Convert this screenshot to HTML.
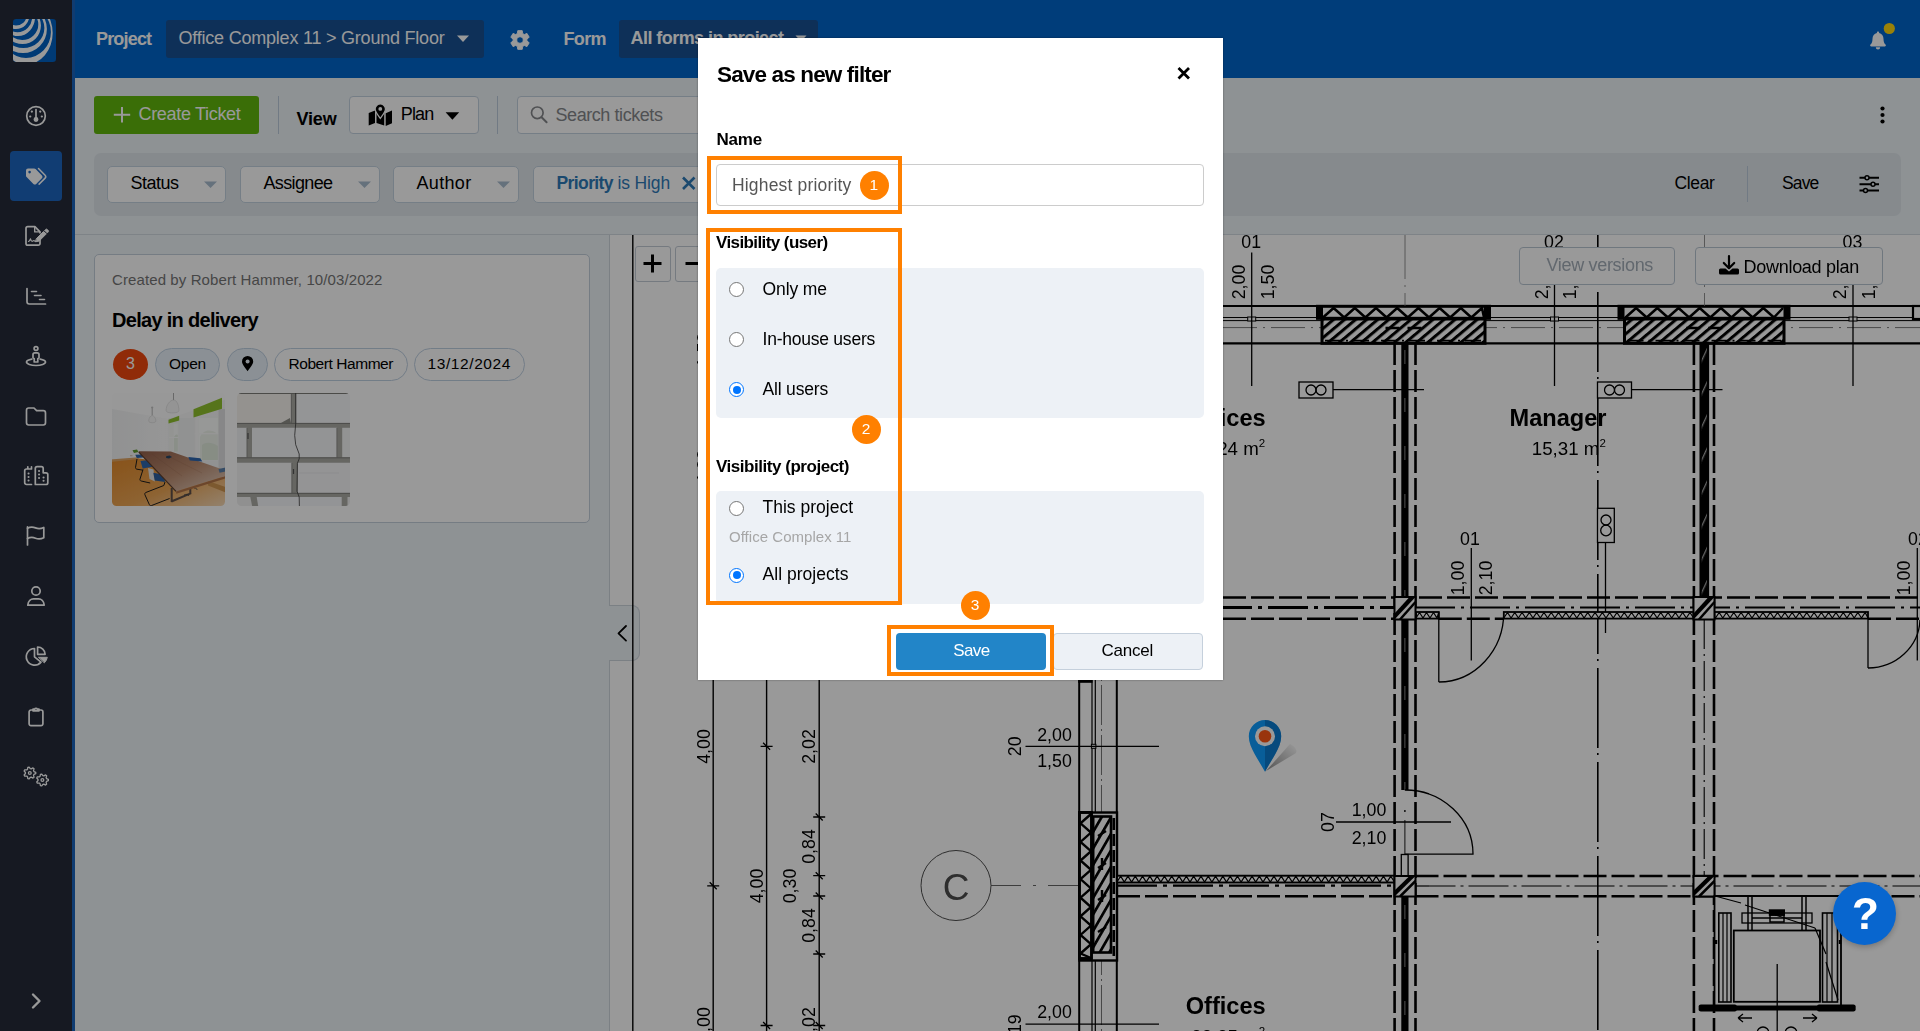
<!DOCTYPE html>
<html lang="en"><head><meta charset="utf-8"><title>Tickets - Save as new filter</title>
<style>
*{box-sizing:border-box;margin:0;padding:0}
html,body{width:1920px;height:1031px;overflow:hidden;background:#edf3f7;font-family:"Liberation Sans",sans-serif;color:#000}
.a{position:absolute}
.t{position:absolute;white-space:pre;line-height:24px;height:24px}
#page{position:absolute;left:0;top:0;width:1920px;height:1031px;overflow:hidden}
#dim{position:absolute;left:0;top:0;width:1920px;height:1031px;background:rgba(0,0,0,.4)}
svg{position:absolute;left:0;top:0;overflow:visible}
  .btn{position:absolute;border:1px solid #c4d2e0;border-radius:4px;background:#fff}
.pill{position:absolute;border:1px solid #bfd0e2;border-radius:17px}
</style></head><body>
<div id="page">
<div class="a" style="left:0;top:0;width:72px;height:1031px;background:#252b3a"></div>
<div class="a" style="left:72px;top:0;width:3px;height:1031px;background:#1b64bd"></div>
<div class="a" style="left:10px;top:151px;width:52px;height:50px;border-radius:4px;background:#1d66c0"></div>
<div class="a" style="left:75px;top:0;width:1845px;height:78px;background:#0066cc"></div>
<div class="a" style="left:166px;top:20px;width:318px;height:38px;border-radius:3px;background:#185093"></div>
<div class="a" style="left:619px;top:20px;width:199px;height:38px;border-radius:3px;background:#185093"></div>
<span class="t" style="left:96.00px;top:26.50px;font-size:18px;font-weight:700;color:#ffffff;letter-spacing:-0.819px;">Project</span>
<span class="t" style="left:178.50px;top:26.00px;font-size:18px;font-weight:400;color:#ffffff;letter-spacing:-0.218px;">Office Complex 11 &gt; Ground Floor</span>
<span class="t" style="left:563.50px;top:26.50px;font-size:18px;font-weight:700;color:#ffffff;letter-spacing:-0.625px;">Form</span>
<span class="t" style="left:630.50px;top:25.50px;font-size:18px;font-weight:700;color:#ffffff;letter-spacing:-0.552px;">All forms in project</span>
<div class="a" style="left:94px;top:96px;width:165px;height:38px;border-radius:3px;background:#61b70d"></div>
<span class="t" style="left:138.50px;top:102.00px;font-size:18px;font-weight:400;color:#ffffff;letter-spacing:-0.311px;">Create Ticket</span>
<div class="a" style="left:278px;top:96px;width:1px;height:38px;background:#bccbdc"></div>
<span class="t" style="left:296.50px;top:106.50px;font-size:18px;font-weight:700;color:#000;letter-spacing:-0.176px;">View</span>
<div class="btn" style="left:349px;top:96px;width:130px;height:38px"></div>
<span class="t" style="left:400.70px;top:102.00px;font-size:18px;font-weight:400;color:#000;letter-spacing:-0.808px;">Plan</span>
<div class="a" style="left:497px;top:96px;width:1px;height:38px;background:#bccbdc"></div>
<div class="btn" style="left:517px;top:96px;width:420px;height:38px"></div>
<span class="t" style="left:555.50px;top:103.00px;font-size:18px;font-weight:400;color:#85878b;letter-spacing:-0.432px;">Search tickets</span>
<div class="a" style="left:94px;top:153px;width:1807px;height:63px;border-radius:7px;background:#dfe7ec"></div>
<div class="btn" style="left:107px;top:166px;width:119px;height:36.5px;border-radius:5px"></div>
<span class="t" style="left:130.50px;top:171.00px;font-size:18px;font-weight:400;color:#000;letter-spacing:-0.505px;">Status</span>
<div class="btn" style="left:240px;top:166px;width:140px;height:36.5px;border-radius:5px"></div>
<span class="t" style="left:263.50px;top:171.00px;font-size:18px;font-weight:400;color:#000;letter-spacing:-0.633px;">Assignee</span>
<div class="btn" style="left:393px;top:166px;width:126px;height:36.5px;border-radius:5px"></div>
<span class="t" style="left:416.50px;top:171.00px;font-size:18px;font-weight:400;color:#000;letter-spacing:0.326px;">Author</span>
<div class="btn" style="left:533px;top:166px;width:200px;height:36.5px;border-radius:5px"></div>
<span class="t" style="left:556.50px;top:171.00px;font-size:17.5px;font-weight:700;color:#2e7ab8;letter-spacing:-0.598px;">Priority</span>
<span class="t" style="left:617.50px;top:171.00px;font-size:17.5px;font-weight:400;color:#2e7ab8;letter-spacing:-0.143px;">is High</span>
<span class="t" style="left:1674.50px;top:171.00px;font-size:17.5px;font-weight:400;color:#000;letter-spacing:-0.366px;">Clear</span>
<div class="a" style="left:1747px;top:166px;width:1px;height:36px;background:#bccbdc"></div>
<span class="t" style="left:1782.00px;top:171.00px;font-size:17.5px;font-weight:400;color:#000;letter-spacing:-0.848px;">Save</span>
<div class="a" style="left:75px;top:234px;width:1845px;height:1px;background:#d3dae1"></div>
<div class="a" style="left:609px;top:235px;width:1px;height:796px;background:#cdd5dd"></div>
<div class="a" style="left:610px;top:235px;width:1310px;height:796px;background:#fff"></div>
<div class="a" style="left:94px;top:254px;width:496px;height:269px;background:#fff;border:1px solid #c3cfdb;border-radius:5px"></div>
<span class="t" style="left:112.00px;top:268.00px;font-size:15px;font-weight:400;color:#757575;letter-spacing:0.102px;">Created by Robert Hammer, 10/03/2022</span>
<span class="t" style="left:112.00px;top:308.00px;font-size:20px;font-weight:700;color:#000;letter-spacing:-0.699px;">Delay in delivery</span>
<div class="a" style="left:113px;top:349px;width:35px;height:31px;border-radius:50%;background:#f0480e"></div>
<span class="t" style="left:126.00px;top:352.00px;font-size:16px;font-weight:400;color:#ffffff;letter-spacing:0.094px;">3</span>
<div class="pill" style="left:155px;top:348px;width:65px;height:33px;background:#e8f1f8"></div>
<span class="t" style="left:169.00px;top:352.00px;font-size:15.5px;font-weight:400;color:#000;letter-spacing:-0.230px;">Open</span>
<div class="pill" style="left:227px;top:348px;width:41px;height:33px;background:#e8f1f8"></div>
<div class="pill" style="left:274px;top:348px;width:134px;height:33px"></div>
<span class="t" style="left:288.50px;top:352.00px;font-size:15.5px;font-weight:400;color:#000;letter-spacing:-0.442px;">Robert Hammer</span>
<div class="pill" style="left:414px;top:348px;width:111px;height:33px"></div>
<span class="t" style="left:427.50px;top:352.00px;font-size:15.5px;font-weight:400;color:#000;letter-spacing:0.592px;">13/12/2024</span>
<svg width="1920" height="1031" viewBox="0 0 1920 1031">
<defs><clipPath id="ph"><rect x="0" y="0" width="113" height="113" rx="4.5"/></clipPath>
<linearGradient id="wall" x1="0" y1="0" x2="1" y2="0"><stop offset="0" stop-color="#f1f2f3"/><stop offset=".45" stop-color="#fafafa"/><stop offset="1" stop-color="#f6f6f7"/></linearGradient>
<linearGradient id="flr" x1="0" y1="0" x2="1" y2="1"><stop offset="0" stop-color="#e2892a"/><stop offset=".55" stop-color="#eca554"/><stop offset="1" stop-color="#f6dcbc"/></linearGradient>
<linearGradient id="tbl" x1="0" y1="0" x2="1" y2="1"><stop offset="0" stop-color="#94604a"/><stop offset=".5" stop-color="#bd8e72"/><stop offset="1" stop-color="#e8d6c8"/></linearGradient>
<filter id="b1"><feGaussianBlur stdDeviation=".45"/></filter>
</defs>
<g transform="translate(112 393)" clip-path="url(#ph)"><g filter="url(#b1)">
<rect x="-2" y="-2" width="117" height="117" fill="url(#wall)"/>
<path d="M-2 -2H115V6L68 22 56 26 0 16Z" fill="#fdfdfd"/>
<path d="M56.500 25H115V80H56.500Z" fill="#f2f3f4"/>
<rect x="82.700" y="23.900" width="24" height="43.600" fill="#f6f8f5"/>
<path d="M86.700 25h19.200v41.900h-19.200z" fill="#fcfdfc"/><path d="M88 44c3-7 10-9 17.900-3v25.900h-17.900z" fill="#eef3ec"/><path d="M90 52c4-3 9-3 15.900 1v13.900h-15.900z" fill="#dde8da" opacity=".8"/>
<path d="M82.700 40.700h24" stroke="#fafafa" stroke-width="1.300"/><path d="M85 23.900v43.600" stroke="#fbfbfb" stroke-width="3"/>
<rect x="57" y="29.700" width="9.400" height="30.300" fill="#f5f7f4"/><path d="M61.700 30.800h4.100v28h-4.100z" fill="#fafcfa"/><path d="M62 44c1.500-3 3-3 3.800-2v16.800h-3.800z" fill="#e6eee3"/><path d="M57 44.500h9.400" stroke="#fafafa" stroke-width="1"/>
<path d="M106.500 16H115V82H106.500Z" fill="#e2e2e3"/>
<path d="M81.500 16.300L110 4.700V15.700L81.500 24.400Z" fill="#8fc22f"/>
<path d="M56.500 26.800L67.200 22.700V27.400L56.500 30.600Z" fill="#8fc22f"/>
<path d="M61.500 -1v8.500" stroke="#777" stroke-width=".6"/><path d="M54.100 17.500c0-5.500 4-10.500 7.400-10.500s5.400 5 5.400 10.500c0 1.600-2.800 2.400-6.400 2.400s-6.400-.8-6.400-2.400z" fill="#f7f7f7" stroke="#cfcfcf" stroke-width=".5"/>
<path d="M40.200 14v8.500" stroke="#888" stroke-width=".6"/><circle cx="40.200" cy="14.500" r="1.100" fill="#c4c4c4"/><path d="M36.700 28c0-3 2-5.500 3.500-5.500s3.700 2.500 3.700 5.500c0 1.100-1.600 1.700-3.600 1.700s-3.600-.6-3.600-1.700z" fill="#f5f5f5" stroke="#cfcfcf" stroke-width=".5"/>
<path d="M-2 67.700L27 65.500 60 70 115 86V115H-2Z" fill="url(#flr)"/>
<path d="M-2 66.400L26.800 64.300V66L-2 68.900Z" fill="#e0a565"/>
<path d="M96 88l19 6.500v5.500l-19-7.500z" fill="#cf9450"/>
<rect x="18" y="62" width="2.500" height="1.300" fill="#d8c8b8"/>
<path d="M59.700 95v14M59.400 108.500l19.800-8.400M78.300 95v6" stroke="#5e5048" stroke-width="2" fill="none"/>
<path d="M72 102c2-1 4-1 5 1M82 95c2 0 3 .5 3 2" stroke="#444" stroke-width=".8" fill="none"/>
<path d="M23.300 61.700l6.500-.3 1.500 3.200-6.500.4zM28.500 68.100l10-1.300 2.200 7-10 1.600z" fill="#2f66ac"/>
<path d="M20.500 57.300l4.500-.8 1.500 2.600-4.500.9z" fill="#5f9a2c"/>
<path d="M36 75l5.500 1.500 1.500 12-5.500-2.500z" fill="#e6e6e6"/><path d="M41.300 79.700l10.500 2 1.200 7.300-10.300-1.500z" fill="#2d5f9f"/>
<path d="M25 66l-1.500 8.500c0 1 .5 1.500 1.500 1.700l6 1M31 76.500l-3 9.500c-.3 1 .2 1.800 1.200 2l9 2M53 89l-1.200 3.500-18 7c-1 .5-1.200 1.200-.9 2.200l4.500 10c.4 1 1.200 1.200 2.200.8l18-7" fill="none" stroke="#1d1d1d" stroke-width="1"/>
<path d="M26.800 58.200L58.800 58.500 115 78V82.500L64 98.400 26.800 59.200Z" fill="url(#tbl)"/>
<path d="M26.800 59.200L64 98.400" fill="none" stroke="#5a3e2e" stroke-width="1.200"/>
<path d="M64 98.400L115 82.500V85L64.300 100.800Z" fill="#b5754a"/>
<path d="M40 61l30 22M50 60l40 20" stroke="#8a5a40" stroke-width=".4" opacity=".5" fill="none"/>
<path d="M54.100 63.200l3.500-.8 2.400 1.600-3 1.500-2.900-.6z" fill="#2b4664"/><path d="M76.300 64l12 1.300 2 3.200-12.500-1z" fill="#2d66b0"/><path d="M106.500 76l7-1.500v4l-6 1.200z" fill="#5a7fa8"/>
</g></g>
<g transform="translate(237 393)" clip-path="url(#ph)"><g filter="url(#b1)">
<rect x="-2" y="-2" width="117" height="117" fill="#aaaaa4"/>
<path d="M-2 .8H54V30.200H-2Z" fill="#f7f4ef"/><path d="M59.300 .8H115V30.200H59.300Z" fill="#f7f8fa"/>
<path d="M-2 34.800H9.800V64.500H-2Z" fill="#f4f5f7"/><path d="M15 34.800H99.800V64.500H15Z" fill="#f6f7f9"/><path d="M105.200 34.800H115V64.500H105.200Z" fill="#f4f5f6"/>
<path d="M-2 69.700H54.600V100H-2Z" fill="#f5f5f6"/><path d="M60.800 69.700H115V100H60.800Z" fill="#f7f7f9"/>
<path d="M-2 104H13.300L15.500 115H-2Z" fill="#f0f0f0"/><path d="M19.700 104H104.700V115H21.500Z" fill="#f6f7fa"/><path d="M110.500 104H115V115H110.500Z" fill="#f0f0f0"/>
<path d="M-2 30.400H115M-2 64.800H115M-2 100.300H115M-2 .5H115" stroke="#7d7d78" stroke-width="1"/>
<path d="M54.300 1V30M99.900 35V64.500M54.900 70V100M10 35V64.500" stroke="#7d7d78" stroke-width=".7"/>
<path d="M43.500 30.200L52.900 24.900 54 30.200Z" fill="#8e8e88"/>
<path d="M11 40v6M56.500 76v5" stroke="#555" stroke-width="1.200"/>
<path d="M58.700 -1L58.700 30.700 57.700 42.400 58.700 51.700 62.200 61 62.200 65.700 60.400 70.300 60 98.300 62.200 104 62.400 114" fill="none" stroke="#3a3a3a" stroke-width=".8"/>
<path d="M62 80h40" stroke="#e2e2e2" stroke-width=".6"/>
</g></g>
</svg>
<div class="a" style="left:609px;top:605px;width:31px;height:56px;background:#edf3f7;border:1px solid #cdd5dd;border-left:none;border-radius:0 8px 8px 0"></div>
<svg width="1920" height="1031" viewBox="0 0 1920 1031" style="font-family:'Liberation Sans',sans-serif">
<defs><clipPath id="pc"><rect x="610" y="235" width="1310" height="796"/></clipPath>
<pattern id="hd" width="7.1" height="7.1" patternUnits="userSpaceOnUse" patternTransform="rotate(50)"><rect width="7.1" height="7.1" fill="#fff"/><rect x="0" y="0" width="3" height="7.1" fill="#000"/></pattern>
<pattern id="hdB" width="8.25" height="8.25" patternUnits="userSpaceOnUse" patternTransform="rotate(30)"><rect width="8.25" height="8.25" fill="#fff"/><rect x="0" y="0" width="2.7" height="8.25" fill="#000"/></pattern>
<pattern id="hd2" width="14" height="14" patternUnits="userSpaceOnUse" patternTransform="rotate(25)"><rect width="14" height="14" fill="#000"/><rect x="0" y="0" width="1.3" height="14" fill="#aaa"/></pattern>
<filter id="pb" x="-5%" y="-5%" width="110%" height="110%"><feGaussianBlur stdDeviation="0.4"/></filter>
</defs>
<g clip-path="url(#pc)"><g filter="url(#pb)" fill="none" stroke="#000" stroke-width="1.3">
<path d="M632.8 235 L632.8 1031" stroke-width="1.4" />
<path d="M713.2 235 L713.2 1031" stroke-width="1.4" />
<path d="M766.6 235 L766.6 1031" stroke-width="1.4" />
<path d="M819.2 235 L819.2 1031" stroke-width="1.4" />
<path d="M760.6 746.3 L772.6 746.3 M763.1 742.8 L770.1 749.8" stroke-width="1.3"/>
<path d="M813.2 817 L825.2 817 M815.7 813.5 L822.7 820.5" stroke-width="1.3"/>
<path d="M813.2 875.7 L825.2 875.7 M815.7 872.2 L822.7 879.2" stroke-width="1.3"/>
<path d="M813.2 896 L825.2 896 M815.7 892.5 L822.7 899.5" stroke-width="1.3"/>
<path d="M813.2 954 L825.2 954 M815.7 950.5 L822.7 957.5" stroke-width="1.3"/>
<path d="M707.2 885.8 L719.2 885.8 M709.7 882.3 L716.7 889.3" stroke-width="1.3"/>
<path d="M760.6 1025.5 L772.6 1025.5 M763.1 1022 L770.1 1029" stroke-width="1.3"/>
<path d="M813.2 1025.5 L825.2 1025.5 M815.7 1022 L822.7 1029" stroke-width="1.3"/>
<path d="M707.2 606 L719.2 606 M709.7 602.5 L716.7 609.5" stroke-width="1.3"/>
<path d="M760.6 467 L772.6 467 M763.1 463.5 L770.1 470.5" stroke-width="1.3"/>
<path d="M813.2 537 L825.2 537 M815.7 533.5 L822.7 540.5" stroke-width="1.3"/>
<path d="M813.2 676 L825.2 676 M815.7 672.5 L822.7 679.5" stroke-width="1.3"/>
<text x="703.8" y="746.5" font-size="17.8" font-weight="400" fill="#000" stroke="none" text-anchor="middle" dominant-baseline="central" transform="rotate(-90 703.8 746.5)">4,00</text>
<text x="809.3" y="746.5" font-size="17.8" font-weight="400" fill="#000" stroke="none" text-anchor="middle" dominant-baseline="central" transform="rotate(-90 809.3 746.5)">2,02</text>
<text x="809.3" y="846.5" font-size="17.8" font-weight="400" fill="#000" stroke="none" text-anchor="middle" dominant-baseline="central" transform="rotate(-90 809.3 846.5)">0,84</text>
<text x="757.2" y="886" font-size="17.8" font-weight="400" fill="#000" stroke="none" text-anchor="middle" dominant-baseline="central" transform="rotate(-90 757.2 886)">4,00</text>
<text x="790.3" y="886" font-size="17.8" font-weight="400" fill="#000" stroke="none" text-anchor="middle" dominant-baseline="central" transform="rotate(-90 790.3 886)">0,30</text>
<text x="809.3" y="925.5" font-size="17.8" font-weight="400" fill="#000" stroke="none" text-anchor="middle" dominant-baseline="central" transform="rotate(-90 809.3 925.5)">0,84</text>
<text x="703.8" y="1024.5" font-size="17.8" font-weight="400" fill="#000" stroke="none" text-anchor="middle" dominant-baseline="central" transform="rotate(-90 703.8 1024.5)">4,00</text>
<text x="809.3" y="1024.5" font-size="17.8" font-weight="400" fill="#000" stroke="none" text-anchor="middle" dominant-baseline="central" transform="rotate(-90 809.3 1024.5)">2,02</text>
<text x="703.8" y="467" font-size="17.8" font-weight="400" fill="#000" stroke="none" text-anchor="middle" dominant-baseline="central" transform="rotate(-90 703.8 467)">4,00</text>
<text x="809.3" y="467" font-size="17.8" font-weight="400" fill="#000" stroke="none" text-anchor="middle" dominant-baseline="central" transform="rotate(-90 809.3 467)">2,02</text>
<text x="757.2" y="606" font-size="17.8" font-weight="400" fill="#000" stroke="none" text-anchor="middle" dominant-baseline="central" transform="rotate(-90 757.2 606)">4,00</text>
<text x="703.8" y="350" font-size="17.8" font-weight="400" fill="#000" stroke="none" text-anchor="middle" dominant-baseline="central" transform="rotate(-90 703.8 350)">1,50</text>
<path d="M1079.2 235 L1079.2 1031" stroke-width="2" />
<path d="M1092 235 L1092 1031" stroke-width="1.2" />
<path d="M1095.3 235 L1095.3 1031" stroke-width="1.2" />
<path d="M1101.5 235 L1101.5 1031" stroke-width="0.8" stroke="#555" stroke-dasharray="40 4 2 4"/>
<path d="M1116.8 235 L1116.8 1031" stroke-width="2" />
<path d="M1078.2 681.3 L1092.6 681.3" stroke-width="3" />
<rect x="1091.4" y="744.3" width="4.5" height="4" fill="#fff" stroke-width="1"/>
<rect x="1079.5" y="812.5" width="37.5" height="148" fill="#fff" stroke-width="2.4"/>
<rect x="1079.5" y="812.5" width="12" height="146" fill="#fff" stroke-width="2.9"/>
<path d="M1091 814 L1080.5 823.3 L1091 832.6 L1080.5 841.9 L1091 851.2 L1080.5 860.5 L1091 869.8 L1080.5 879.1 L1091 888.4 L1080.5 897.7 L1091 907 L1080.5 916.3 L1091 925.6 L1080.5 934.9 L1091 944.2 L1080.5 953.5 L1091 958" stroke-width="2.4"/>
<rect x="1093.2" y="816.5" width="17.8" height="136" fill="url(#hdB)" stroke-width="2.6"/>
<path d="M1098 836l8-5M1098 868l8-5M1098 900l8-5M1098 932l8-5M1102 858v12M1102 890v12" stroke-width="2.4"/>
<path d="M1113.8 818 L1113.8 956" stroke-width="2.6" stroke-dasharray="12 4"/>
<path d="M1025.5 746.3 L1159 746.3" stroke-width="1.3" />
<text x="1015.5" y="746.3" font-size="17.8" font-weight="400" fill="#000" stroke="none" text-anchor="middle" dominant-baseline="central" transform="rotate(-90 1015.5 746.3)">20</text>
<text x="1054.5" y="734.5" font-size="17.8" font-weight="400" fill="#000" stroke="none" text-anchor="middle" dominant-baseline="central">2,00</text>
<text x="1054.5" y="761.1" font-size="17.8" font-weight="400" fill="#000" stroke="none" text-anchor="middle" dominant-baseline="central">1,50</text>
<path d="M1025.5 1024.2 L1159 1024.2" stroke-width="1.3" />
<text x="1015.5" y="1024.2" font-size="17.8" font-weight="400" fill="#000" stroke="none" text-anchor="middle" dominant-baseline="central" transform="rotate(-90 1015.5 1024.2)">19</text>
<text x="1054.5" y="1012.4" font-size="17.8" font-weight="400" fill="#000" stroke="none" text-anchor="middle" dominant-baseline="central">2,00</text>
<text x="1054.5" y="1039" font-size="17.8" font-weight="400" fill="#000" stroke="none" text-anchor="middle" dominant-baseline="central">1,50</text>
<path d="M1025.5 468 L1159 468" stroke-width="1.3" />
<text x="1015.5" y="468" font-size="17.8" font-weight="400" fill="#000" stroke="none" text-anchor="middle" dominant-baseline="central" transform="rotate(-90 1015.5 468)">21</text>
<text x="1054.5" y="456.2" font-size="17.8" font-weight="400" fill="#000" stroke="none" text-anchor="middle" dominant-baseline="central">2,00</text>
<text x="1054.5" y="482.8" font-size="17.8" font-weight="400" fill="#000" stroke="none" text-anchor="middle" dominant-baseline="central">1,50</text>
<circle cx="956" cy="885.5" r="35" stroke="#4d4d4d" stroke-width="1"/>
<text x="956" y="887" font-size="37" font-weight="400" fill="#4d4d4d" stroke="none" text-anchor="middle" dominant-baseline="central">C</text>
<path d="M991 885.5 L1079 885.5" stroke-width="0.9" stroke="#555" stroke-dasharray="30 12 3 12"/>
<path d="M1079 306 L1920 306" stroke-width="2.2" />
<path d="M1079 343.3 L1920 343.3" stroke-width="2.2" />
<path d="M1079 317.5 L1920 317.5" stroke-width="1" />
<path d="M1079 320.6 L1920 320.6" stroke-width="1" />
<path d="M1079 327.6 L1920 327.6" stroke-width="0.8" stroke="#555" stroke-dasharray="34 6 2 6"/>
<rect x="1317.5" y="306.3" width="172" height="12" fill="#fff" stroke-width="3"/>
<path d="M1323 317.5 L1333.6 308 L1344.2 317.5 L1354.8 308 L1365.4 317.5 L1376 308 L1386.6 317.5 L1397.2 308 L1407.8 317.5 L1418.4 308 L1429 317.5 L1439.6 308 L1450.2 317.5 L1460.8 308 L1471.4 317.5 L1482 308 L1484 317.5" stroke-width="2.5"/>
<rect x="1317.5" y="306.3" width="4.5" height="12" fill="#000" stroke-width="2"/>
<rect x="1485" y="306.3" width="4.5" height="12" fill="#000" stroke-width="2"/>
<rect x="1322" y="319" width="163" height="24.3" fill="url(#hd)" stroke-width="3"/>
<path d="M1325 340.6 L1482 340.6" stroke-width="1.6" stroke-dasharray="16 5 2 5"/>
<path d="M1385.5 328 h14 m8 0 h14" stroke-width="2.6"/>
<rect x="1619" y="306.3" width="170" height="12" fill="#fff" stroke-width="3"/>
<path d="M1625.5 317.5 L1636.1 308 L1646.7 317.5 L1657.3 308 L1667.9 317.5 L1678.5 308 L1689.1 317.5 L1699.7 308 L1710.3 317.5 L1720.9 308 L1731.5 317.5 L1742.1 308 L1752.7 317.5 L1763.3 308 L1773.9 317.5 L1783 308" stroke-width="2.5"/>
<rect x="1619" y="306.3" width="4.5" height="12" fill="#000" stroke-width="2"/>
<rect x="1784.5" y="306.3" width="4.5" height="12" fill="#000" stroke-width="2"/>
<rect x="1624.5" y="319" width="159.5" height="24.3" fill="url(#hd)" stroke-width="3"/>
<path d="M1627.5 340.6 L1781 340.6" stroke-width="1.6" stroke-dasharray="16 5 2 5"/>
<path d="M1686.25 328 h14 m8 0 h14" stroke-width="2.6"/>
<rect x="1913" y="306" width="9" height="13" fill="#fff" stroke-width="2.2"/>
<rect x="1247.7" y="317" width="8" height="4" fill="#fff" stroke-width="1"/>
<rect x="1550.5" y="317" width="8" height="4" fill="#fff" stroke-width="1"/>
<rect x="1849" y="317" width="8" height="4" fill="#fff" stroke-width="1"/>
<text x="1251.2" y="242" font-size="17.8" font-weight="400" fill="#000" stroke="none" text-anchor="middle" dominant-baseline="central">01</text>
<path d="M1251.7 252.5 L1251.7 386" stroke-width="1.3" />
<text x="1239" y="282" font-size="17.8" font-weight="400" fill="#000" stroke="none" text-anchor="middle" dominant-baseline="central" transform="rotate(-90 1239 282)">2,00</text>
<text x="1267.5" y="282" font-size="17.8" font-weight="400" fill="#000" stroke="none" text-anchor="middle" dominant-baseline="central" transform="rotate(-90 1267.5 282)">1,50</text>
<text x="1554" y="242" font-size="17.8" font-weight="400" fill="#000" stroke="none" text-anchor="middle" dominant-baseline="central">02</text>
<path d="M1554.5 252.5 L1554.5 386" stroke-width="1.3" />
<text x="1541.8" y="282" font-size="17.8" font-weight="400" fill="#000" stroke="none" text-anchor="middle" dominant-baseline="central" transform="rotate(-90 1541.8 282)">2,00</text>
<text x="1570.3" y="282" font-size="17.8" font-weight="400" fill="#000" stroke="none" text-anchor="middle" dominant-baseline="central" transform="rotate(-90 1570.3 282)">1,50</text>
<text x="1852.5" y="242" font-size="17.8" font-weight="400" fill="#000" stroke="none" text-anchor="middle" dominant-baseline="central">03</text>
<path d="M1853 252.5 L1853 386" stroke-width="1.3" />
<text x="1840.3" y="282" font-size="17.8" font-weight="400" fill="#000" stroke="none" text-anchor="middle" dominant-baseline="central" transform="rotate(-90 1840.3 282)">2,00</text>
<text x="1868.8" y="282" font-size="17.8" font-weight="400" fill="#000" stroke="none" text-anchor="middle" dominant-baseline="central" transform="rotate(-90 1868.8 282)">1,50</text>
<path d="M1405 235 L1405 306" stroke-width="0.8" stroke="#777" stroke-dasharray="44 6 2 6"/>
<path d="M1704.5 235 L1704.5 306" stroke-width="0.8" stroke="#777" stroke-dasharray="44 6 2 6"/>
<path d="M1597.8 198 L1597.8 1031" stroke-width="1.6" stroke-dasharray="80 5 2 7"/>
<rect x="1299" y="382" width="34" height="16" fill="#fff" stroke-width="1.3"/>
<circle cx="1311" cy="390" r="5" stroke-width="1.3"/><circle cx="1321" cy="390" r="5" stroke-width="1.3"/>
<path d="M1333 389.6 L1424 389.6" stroke-width="1.3" />
<rect x="1597.5" y="382" width="34" height="16" fill="#fff" stroke-width="1.3"/>
<circle cx="1609.5" cy="390" r="5" stroke-width="1.3"/><circle cx="1619.5" cy="390" r="5" stroke-width="1.3"/>
<path d="M1631.5 389.6 L1722.5 389.6" stroke-width="1.3" />
<rect x="1597.5" y="508.3" width="16.8" height="34.2" fill="#fff" stroke-width="1.3"/>
<circle cx="1606" cy="520" r="5" stroke-width="1.3"/><circle cx="1606" cy="530.5" r="5.3" stroke-width="1.3"/>
<path d="M1605.5 542.5 L1605.5 633" stroke-width="1.3" />
<path d="M1223 597.6 L1920 597.6" stroke-width="2.5" stroke-dasharray="23 5"/>
<path d="M1223 618.8 L1394 618.8" stroke-width="2.5" stroke-dasharray="23 5"/>
<path d="M1438.8 618.8 L1503.8 618.8" stroke-width="2.5" stroke-dasharray="23 5"/>
<path d="M1868 618.8 L1920 618.8" stroke-width="2.5" stroke-dasharray="23 5"/>
<path d="M1212 607.6 L1394 607.6" stroke-width="3" stroke-dasharray="40 6 4 6"/>
<path d="M1415 607.6 L1920 607.6" stroke-width="2" stroke-dasharray="40 6 3 6"/>
<rect x="1416" y="612" width="22.8" height="6.6" fill="#fff" stroke-width="1.8"/>
<path d="M1416 618 L1419.5 612.5 L1423 618 L1426.5 612.5 L1430 618 L1433.5 612.5 L1437 618 L1438.8 612.5" stroke-width="1.2"/>
<path d="M1438.8 612 L1438.8 682" stroke-width="1.3" />
<path d="M1438.8 682 A65 70 0 0 0 1503.8 612" stroke-width="1.3"/>
<rect x="1503.8" y="612" width="364.2" height="6.6" fill="#fff" stroke-width="1.8"/>
<path d="M1503.8 618 L1507.45 612.5 L1511.1 618 L1514.75 612.5 L1518.4 618 L1522.05 612.5 L1525.7 618 L1529.35 612.5 L1533 618 L1536.65 612.5 L1540.3 618 L1543.95 612.5 L1547.6 618 L1551.25 612.5 L1554.9 618 L1558.55 612.5 L1562.2 618 L1565.85 612.5 L1569.5 618 L1573.15 612.5 L1576.8 618 L1580.45 612.5 L1584.1 618 L1587.75 612.5 L1591.4 618 L1595.05 612.5 L1598.7 618 L1602.35 612.5 L1606 618 L1609.65 612.5 L1613.3 618 L1616.95 612.5 L1620.6 618 L1624.25 612.5 L1627.9 618 L1631.55 612.5 L1635.2 618 L1638.85 612.5 L1642.5 618 L1646.15 612.5 L1649.8 618 L1653.45 612.5 L1657.1 618 L1660.75 612.5 L1664.4 618 L1668.05 612.5 L1671.7 618 L1675.35 612.5 L1679 618 L1682.65 612.5 L1686.3 618 L1689.95 612.5 L1693.6 618 L1697.25 612.5 L1700.9 618 L1704.55 612.5 L1708.2 618 L1711.85 612.5 L1715.5 618 L1719.15 612.5 L1722.8 618 L1726.45 612.5 L1730.1 618 L1733.75 612.5 L1737.4 618 L1741.05 612.5 L1744.7 618 L1748.35 612.5 L1752 618 L1755.65 612.5 L1759.3 618 L1762.95 612.5 L1766.6 618 L1770.25 612.5 L1773.9 618 L1777.55 612.5 L1781.2 618 L1784.85 612.5 L1788.5 618 L1792.15 612.5 L1795.8 618 L1799.45 612.5 L1803.1 618 L1806.75 612.5 L1810.4 618 L1814.05 612.5 L1817.7 618 L1821.35 612.5 L1825 618 L1828.65 612.5 L1832.3 618 L1835.95 612.5 L1839.6 618 L1843.25 612.5 L1846.9 618 L1850.55 612.5 L1854.2 618 L1857.85 612.5 L1861.5 618 L1865.15 612.5 L1868 618" stroke-width="1.2"/>
<path d="M1868 618 L1868 668" stroke-width="1.3" />
<path d="M1868 668 A52 50 0 0 0 1920 620" stroke-width="1.3"/>
<text x="1470" y="538.5" font-size="17.8" font-weight="400" fill="#000" stroke="none" text-anchor="middle" dominant-baseline="central">01</text>
<path d="M1471.3 548 L1471.3 660.5" stroke-width="1.3" />
<text x="1458.3" y="578" font-size="17.8" font-weight="400" fill="#000" stroke="none" text-anchor="middle" dominant-baseline="central" transform="rotate(-90 1458.3 578)">1,00</text>
<text x="1486.3" y="578" font-size="17.8" font-weight="400" fill="#000" stroke="none" text-anchor="middle" dominant-baseline="central" transform="rotate(-90 1486.3 578)">2,10</text>
<text x="1918" y="538.5" font-size="17.8" font-weight="400" fill="#000" stroke="none" text-anchor="middle" dominant-baseline="central">02</text>
<path d="M1917.3 548 L1917.3 660.5" stroke-width="1.3" />
<text x="1904.3" y="578" font-size="17.8" font-weight="400" fill="#000" stroke="none" text-anchor="middle" dominant-baseline="central" transform="rotate(-90 1904.3 578)">1,00</text>
<path d="M1394.6 343 L1394.6 1031" stroke-width="2.6" stroke-dasharray="22 5"/>
<path d="M1415.5 343 L1415.5 1031" stroke-width="2.6" stroke-dasharray="22 5"/>
<rect x="1401.3" y="343" width="7.2" height="447" fill="#000" stroke="none"/>
<path d="M1404.9 350 L1404.9 790" stroke-width="1" stroke="#8a8a8a" stroke-dasharray="14 34"/>
<rect x="1401.3" y="896" width="7.2" height="140" fill="#000" stroke="none"/>
<path d="M1404.9 905 L1404.9 1031" stroke-width="1" stroke="#8a8a8a" stroke-dasharray="14 34"/>
<path d="M1404.8 790 A68 64 0 0 1 1473 854.2 L1404.8 854.2" stroke-width="1.3"/>
<path d="M1404.9 820 L1404.9 854" stroke-width="0.9" />
<circle cx="1404.9" cy="811" r="0.9" fill="#000" stroke="none"/>
<rect x="1401.3" y="854.5" width="6.8" height="22" fill="#fff" stroke-width="1.3"/>
<text x="1327.5" y="822" font-size="17.8" font-weight="400" fill="#000" stroke="none" text-anchor="middle" dominant-baseline="central" transform="rotate(-90 1327.5 822)">07</text>
<path d="M1336 822 L1451 822" stroke-width="1.3" />
<text x="1369" y="810" font-size="17.8" font-weight="400" fill="#000" stroke="none" text-anchor="middle" dominant-baseline="central">1,00</text>
<text x="1369" y="838.3" font-size="17.8" font-weight="400" fill="#000" stroke="none" text-anchor="middle" dominant-baseline="central">2,10</text>
<path d="M1693.9 343 L1693.9 1031" stroke-width="2.6" stroke-dasharray="22 5"/>
<path d="M1714 343 L1714 1031" stroke-width="2.6" stroke-dasharray="22 5"/>
<rect x="1700.6" y="343" width="7.4" height="254.5" fill="url(#hd2)" stroke-width="2.2"/>
<path d="M1704.2 619 L1704.2 876" stroke-width="1.1" stroke-dasharray="30 5 2 5"/>
<rect x="1117" y="875.7" width="277.5" height="6.8" fill="#fff" stroke-width="1.9"/>
<path d="M1117 882 L1120.65 876.2 L1124.3 882 L1127.95 876.2 L1131.6 882 L1135.25 876.2 L1138.9 882 L1142.55 876.2 L1146.2 882 L1149.85 876.2 L1153.5 882 L1157.15 876.2 L1160.8 882 L1164.45 876.2 L1168.1 882 L1171.75 876.2 L1175.4 882 L1179.05 876.2 L1182.7 882 L1186.35 876.2 L1190 882 L1193.65 876.2 L1197.3 882 L1200.95 876.2 L1204.6 882 L1208.25 876.2 L1211.9 882 L1215.55 876.2 L1219.2 882 L1222.85 876.2 L1226.5 882 L1230.15 876.2 L1233.8 882 L1237.45 876.2 L1241.1 882 L1244.75 876.2 L1248.4 882 L1252.05 876.2 L1255.7 882 L1259.35 876.2 L1263 882 L1266.65 876.2 L1270.3 882 L1273.95 876.2 L1277.6 882 L1281.25 876.2 L1284.9 882 L1288.55 876.2 L1292.2 882 L1295.85 876.2 L1299.5 882 L1303.15 876.2 L1306.8 882 L1310.45 876.2 L1314.1 882 L1317.75 876.2 L1321.4 882 L1325.05 876.2 L1328.7 882 L1332.35 876.2 L1336 882 L1339.65 876.2 L1343.3 882 L1346.95 876.2 L1350.6 882 L1354.25 876.2 L1357.9 882 L1361.55 876.2 L1365.2 882 L1368.85 876.2 L1372.5 882 L1376.15 876.2 L1379.8 882 L1383.45 876.2 L1387.1 882 L1390.75 876.2 L1394.4 882 L1394.5 876.2" stroke-width="1.2"/>
<path d="M1117 885.6 L1394 885.6" stroke-width="2.4" stroke-dasharray="40 6 4 6"/>
<path d="M1117 896.2 L1394 896.2" stroke-width="2.5" stroke-dasharray="23 5"/>
<path d="M1415.5 876 L1920 876" stroke-width="2.5" stroke-dasharray="23 5"/>
<path d="M1415.5 896.3 L1920 896.3" stroke-width="2.5" stroke-dasharray="23 5"/>
<path d="M1415.5 886 L1920 886" stroke-width="1.2" stroke-dasharray="40 5 3 5"/>
<rect x="1394.5" y="597" width="21" height="22.5" fill="#fff" stroke-width="2"/>
<path d="M1394.5 619.5 L1394.5 613.5 L1409.5 597 L1415.5 597 Z" fill="#000" stroke="none"/>
<path d="M1400 619.5 L1415.5 602" stroke-width="2.5"/>
<rect x="1693.5" y="597" width="21" height="22.5" fill="#fff" stroke-width="2"/>
<path d="M1693.5 619.5 L1693.5 613.5 L1708.5 597 L1714.5 597 Z" fill="#000" stroke="none"/>
<path d="M1699 619.5 L1714.5 602" stroke-width="2.5"/>
<rect x="1394.5" y="876" width="21" height="20.5" fill="#fff" stroke-width="2"/>
<path d="M1394.5 896.5 L1394.5 890.5 L1409.5 876 L1415.5 876 Z" fill="#000" stroke="none"/>
<path d="M1400 896.5 L1415.5 881" stroke-width="2.5"/>
<rect x="1693.5" y="876" width="21" height="20.5" fill="#fff" stroke-width="2"/>
<path d="M1693.5 896.5 L1693.5 890.5 L1708.5 876 L1714.5 876 Z" fill="#000" stroke="none"/>
<path d="M1699 896.5 L1714.5 881" stroke-width="2.5"/>
<text x="1558" y="417.5" font-size="23.6" font-weight="700" fill="#000" stroke="none" text-anchor="middle" dominant-baseline="central">Manager</text>
<text x="1565.6" y="448" font-size="18.7" font-weight="400" fill="#000" stroke="none" text-anchor="middle" dominant-baseline="central">15,31 m</text>
<text x="1602.6" y="442.5" font-size="11.5" font-weight="400" fill="#000" stroke="none" text-anchor="middle" dominant-baseline="central">2</text>
<text x="1225.7" y="417.5" font-size="23.6" font-weight="700" fill="#000" stroke="none" text-anchor="middle" dominant-baseline="central">Offices</text>
<text x="1225" y="448" font-size="18.7" font-weight="400" fill="#000" stroke="none" text-anchor="middle" dominant-baseline="central">32,24 m</text>
<text x="1262" y="442.5" font-size="11.5" font-weight="400" fill="#000" stroke="none" text-anchor="middle" dominant-baseline="central">2</text>
<text x="1225.7" y="1005.5" font-size="23.6" font-weight="700" fill="#000" stroke="none" text-anchor="middle" dominant-baseline="central">Offices</text>
<text x="1225" y="1036" font-size="18.7" font-weight="400" fill="#000" stroke="none" text-anchor="middle" dominant-baseline="central">23,25 m</text>
<text x="1262" y="1030.5" font-size="11.5" font-weight="400" fill="#000" stroke="none" text-anchor="middle" dominant-baseline="central">2</text>
<path d="M1714.5 896 H1841 V1008 H1714.5 Z" fill="#fff" stroke-width="1.8"/>
<rect x="1698.8" y="1005.5" width="156.5" height="5" fill="#000" stroke="none"/>
<rect x="1698.8" y="1004.5" width="38" height="7" rx="2" fill="#000" stroke="none"/>
<rect x="1817" y="1004.5" width="38.5" height="7" rx="2" fill="#000" stroke="none"/>
<rect x="1733.8" y="930.5" width="86.2" height="71.3" fill="#fff" stroke-width="1.8"/>
<rect x="1718.8" y="913" width="12.2" height="89" fill="#fff" stroke-width="1.6"/>
<path d="M1723 913 L1723 1002" stroke-width="1.2" />
<path d="M1727 913 L1727 1002" stroke-width="1.2" />
<rect x="1822.5" y="913" width="15" height="89" fill="#fff" stroke-width="1.6"/>
<path d="M1827 913 L1827 1002" stroke-width="1.2" />
<path d="M1832 913 L1832 1002" stroke-width="1.2" />
<path d="M1748 896 L1748 930" stroke-width="1.5" />
<path d="M1752 896 L1752 930" stroke-width="1.5" />
<path d="M1802 896 L1802 930" stroke-width="1.5" />
<path d="M1806 896 L1806 930" stroke-width="1.5" />
<rect x="1742" y="913" width="70" height="10" stroke-width="1.3"/>
<path d="M1752 918 L1802 918" stroke-width="1.3" />
<rect x="1768.8" y="909.3" width="16.2" height="6.5" fill="#000" stroke="none"/>
<rect x="1770" y="915" width="14" height="7" fill="none" stroke-width="1.5"/>
<path d="M1715 896 L1741 903" stroke-width="1.2" />
<path d="M1745 905 L1815 928" stroke-width="1.2" />
<path d="M1815 928 L1826 954" stroke-width="1.2" />
<path d="M1826 962 L1838 1000" stroke-width="1.2" />
<path d="M1777.2 964 L1777.2 1031" stroke-width="1.3" />
<path d="M1716 940 L1716 944" stroke-width="2.5" />
<path d="M1840 940 L1840 944" stroke-width="2.5" />
<path d="M1738 1018 h14 M1738 1018 l5 -4 M1738 1018 l5 4 M1817 1018 h-14 M1817 1018 l-5 -4 M1817 1018 l-5 4" stroke-width="1.3"/>
<circle cx="1763" cy="1033" r="6" stroke-width="1.3"/><circle cx="1791" cy="1033" r="6" stroke-width="1.3"/>
</g></g>
<g clip-path="url(#pc)">
<defs><linearGradient id="sh" x1="0" y1="1" x2="1" y2="0"><stop offset="0" stop-color="#000" stop-opacity=".45"/><stop offset="1" stop-color="#000" stop-opacity="0"/></linearGradient></defs>
<path d="M1266 771 L1290 744 Q1298 748 1296 753 Z" fill="url(#sh)"/>
<path d="M1265 771.8 C1259 760 1248.8 748 1248.8 736.2 A16.2 16.2 0 0 1 1281.2 736.2 C1281.2 748 1271 760 1265 771.8 Z" fill="#0e9dff"/>
<path d="M1265 771.8 C1271 760 1281.2 748 1281.2 736.2 A16.2 16.2 0 0 0 1265 720 Z" fill="#06549a" opacity=".45"/>
<circle cx="1265" cy="736.3" r="10" fill="#fff"/>
<circle cx="1265" cy="736.3" r="6.3" fill="#ff5814"/>
</g>
</svg>
<div class="btn" style="left:634.5px;top:245.5px;width:36px;height:36px;border-color:#c3ccd5;border-radius:3px"></div>
<div class="btn" style="left:674.5px;top:245.5px;width:36px;height:36px;border-color:#c3ccd5;border-radius:3px"></div>
<svg width="1920" height="1031"><path d="M652.500 254.500v18M643.500 263.500h18M685.500 263.500h16" stroke="#000" stroke-width="3" fill="none"/></svg>
<div class="btn" style="left:1519px;top:247px;width:156px;height:38px;border-color:#bac6d3"></div>
<span class="t" style="left:1546.50px;top:253.00px;font-size:18px;font-weight:400;color:#a3adb8;letter-spacing:-0.325px;">View versions</span>
<div class="btn" style="left:1695px;top:247px;width:187.5px;height:38px;border-color:#bac6d3"></div>
<span class="t" style="left:1743.50px;top:254.50px;font-size:18px;font-weight:400;color:#000;letter-spacing:-0.276px;">Download plan</span>
<svg width="1920" height="1031"><path d="M1729 256v11.500M1723.800 263l5.200 5.200 5.200-5.200" stroke="#000" stroke-width="2.200" fill="none" stroke-linecap="round" stroke-linejoin="round"/><path d="M1720.500 268.500h5l3.500 3 3.500-3h5a1.500 1.500 0 0 1 1.500 1.500v3a1.500 1.500 0 0 1-1.500 1.500h-17a1.500 1.500 0 0 1-1.500-1.500v-3a1.500 1.500 0 0 1 1.500-1.500z" fill="#000"/></svg>
<svg width="1920" height="1031" viewBox="0 0 1920 1031">
<defs><clipPath id="lg"><rect x="13" y="19" width="43" height="43" rx="3.3"/></clipPath></defs>
<g clip-path="url(#lg)"><rect x="13" y="19" width="43" height="43" fill="#0061c4"/>
<path d="M2.74 16.00 a13.26 13.00 0 1 0 26.52 0 a13.26 13.00 0 1 0 -26.52 0Z M5.60 16.00 a10.40 9.45 0 1 0 20.80 0 a10.40 9.45 0 1 0 -20.80 0Z" fill="#fff" fill-rule="evenodd"/>
<path d="M0.97 17.00 a17.03 19.10 0 1 0 34.06 0 a17.03 19.10 0 1 0 -34.06 0Z M2.82 17.00 a14.68 15.30 0 1 0 29.36 0 a14.68 15.30 0 1 0 -29.36 0Z" fill="#fff" fill-rule="evenodd"/>
<path d="M4.05 25.57 a18.45 18.48 0 1 0 36.90 0 a18.45 18.48 0 1 0 -36.90 0Z M5.88 24.50 a16.20 15.50 0 1 0 32.40 0 a16.20 15.50 0 1 0 -32.40 0Z" fill="#fff" fill-rule="evenodd"/>
<path d="M-0.90 29.00 a23.90 24.10 0 1 0 47.80 0 a23.90 24.10 0 1 0 -47.80 0Z M2.24 28.00 a21.06 20.08 0 1 0 42.12 0 a21.06 20.08 0 1 0 -42.12 0Z" fill="#fff" fill-rule="evenodd"/>
<path d="M-0.68 33.00 a26.68 31.50 0 1 0 53.36 0 a26.68 31.50 0 1 0 -53.36 0Z M1.10 32.00 a24.90 25.90 0 1 0 49.80 0 a24.90 25.90 0 1 0 -49.80 0Z" fill="#fff" fill-rule="evenodd"/>
</g>
<g fill="none" stroke="#fff" stroke-width="1.7" stroke-linecap="round" stroke-linejoin="round">
<circle cx="36" cy="116" r="9.3"/><path d="M36 109.5v8.5"/><circle cx="36" cy="119.5" r="1.6" fill="#fff"/>
<path d="M30.2 116.5h.1M31.8 111.6h.1M40.2 111.6h.1M41.8 116.5h.1" stroke-width="2.2"/>
<path d="M40 238v5.5a1.7 1.7 0 0 1-1.7 1.7H27.7a1.7 1.7 0 0 1-1.7-1.7V228.4a1.7 1.7 0 0 1 1.7-1.7h7.2l5.1 5.1v1"/>
<path d="M34.7 226.9v5h5" stroke-width="1.4"/>
<path d="M28.5 241.5c1-.3 1.4-1.3 2-2.7.4 1.6.9 2.6 1.6 2.6.7 0 1-.9 1.5-.9.5 0 .8.9 2.2.9" stroke-width="1.2"/>
<path d="M36.5 238.5l7-7 2.6 2.6-7 7-3.2.6z" fill="#fff" stroke-width="1"/><path d="M44.6 230.4l1-1a1.2 1.2 0 0 1 1.7 0l.9.9a1.2 1.2 0 0 1 0 1.7l-1 1z" fill="#fff" stroke-width=".8"/>
<path d="M27 288.5v13.3a2.2 2.2 0 0 0 2.2 2.2H45.5"/><path d="M31.5 291.5h5M34.5 295.5h6.5M39.5 299.5h5" stroke-width="1.6"/>
<circle cx="36" cy="348.5" r="1.9"/><path d="M33 354.6a1.7 1.7 0 0 1 1.7-1.7h2.6a1.7 1.7 0 0 1 1.7 1.7v3.2l-1.2.8v3.4h-3.6v-3.4l-1.2-.8z"/>
<path d="M31.8 359.2c-3.2.6-5.3 1.7-5.3 2.9 0 1.9 4.3 3.4 9.5 3.4s9.5-1.5 9.5-3.4c0-1.2-2.100-2.300-5.300-2.900"/>
<path d="M26.500 410.200a2.200 2.200 0 0 1 2.200-2.200h5.300l2.600 2.700h6.700a2.200 2.200 0 0 1 2.200 2.200v9.900a2.200 2.200 0 0 1-2.200 2.200H28.700a2.200 2.200 0 0 1-2.200-2.200z"/>
<path d="M31.500 484.500h-5a1.800 1.800 0 0 1-1.800-1.800v-11.900a1.800 1.800 0 0 1 1.800-1.800h5M27.800 469v-2.200M31.500 469v-2.200" />
<path d="M35.300 484.500v-16a1.800 1.800 0 0 1 1.800-1.800h4.300a1.800 1.800 0 0 1 1.800 1.800v4.300h2.800a1.800 1.800 0 0 1 1.800 1.800v8.100a1.800 1.800 0 0 1-1.800 1.800z"/>
<path d="M28.500 473.500h.1M28.500 477h.1M28.500 480.500h.1M39 471h.1M39 474.500h.1M39 478h.1M43.500 477.500h.1M43.500 480.800h.1" stroke-width="2"/>
<path d="M27.500 526.800v18.200"/><path d="M27.500 528.300c3-1.700 5.300-1.500 8 -.4s5 1.100 8.300-.4v10.300c-3.300 1.500-5.600 1.500-8.300.4s-5-1.300-8 .4"/>
<circle cx="36" cy="591" r="4.200"/><path d="M27.800 605.200c.4-4.200 3.200-6.300 5.600-6.300h5.200c2.400 0 5.200 2.100 5.600 6.300z"/>
<path d="M34.500 648.500a8.300 8.300 0 1 0 6.500 13.600l-6.500-5.300z"/><path d="M37.600 647v7.300h7.500a7.600 7.600 0 0 0-7.500-7.300z"/><path d="M38.800 657.300h8.500a9 9 0 0 1-2.700 5.300z" fill="#fff" stroke-width="1"/>
<path d="M32.800 710h-1.800a1.900 1.900 0 0 0-1.900 1.900v11.900a1.900 1.900 0 0 0 1.900 1.900h10a1.900 1.900 0 0 0 1.900-1.900v-11.900a1.900 1.900 0 0 0-1.900-1.900h-1.800"/><path d="M33 710.800v-1.600h1.700a1.400 1.400 0 0 1 2.600 0h1.700v1.600z"/>
<path d="M35.76 772.33 L35.76 773.67 L33.95 774.45 L33.53 775.34 L34.04 777.24 L32.99 778.08 L31.25 777.15 L30.29 777.37 L29.13 778.96 L27.82 778.66 L27.46 776.73 L26.69 776.11 L24.72 776.19 L24.14 774.98 L25.43 773.49 L25.43 772.51 L24.14 771.02 L24.72 769.81 L26.69 769.89 L27.46 769.27 L27.82 767.34 L29.13 767.04 L30.29 768.63 L31.25 768.85 L32.99 767.92 L34.04 768.76 L33.53 770.66 L33.95 771.55 Z" stroke-width="1.3"/><circle cx="29.8" cy="773" r="1.4" stroke-width="1.3"/>
<path d="M48.36 779.33 L48.36 780.67 L46.55 781.45 L46.13 782.34 L46.64 784.24 L45.59 785.08 L43.85 784.15 L42.89 784.37 L41.73 785.96 L40.42 785.66 L40.06 783.73 L39.29 783.11 L37.32 783.19 L36.74 781.98 L38.03 780.49 L38.03 779.51 L36.74 778.02 L37.32 776.81 L39.29 776.89 L40.06 776.27 L40.42 774.34 L41.73 774.04 L42.89 775.63 L43.85 775.85 L45.59 774.92 L46.64 775.76 L46.13 777.66 L46.55 778.55 Z" stroke-width="1.3"/><circle cx="42.4" cy="780" r="1.4" stroke-width="1.3"/>
</g>
<path d="M26 170.500a2 2 0 0 1 2-2h6.200a2 2 0 0 1 1.400.6l6.300 6.300a2 2 0 0 1 0 2.800l-5.700 5.700a2 2 0 0 1-2.800 0l-6.800-6.800a2 2 0 0 1-.6-1.400z" fill="#fff"/><circle cx="29.600" cy="172.100" r="1.300" fill="#1d66c0"/>
<path d="M38.500 168.500l6.600 6.800a2 2 0 0 1 0 2.800l-6 6" fill="none" stroke="#fff" stroke-width="1.500" stroke-linecap="round"/>
<path d="M33 994.500l6.500 6.500-6.500 6.500" fill="none" stroke="#fff" stroke-width="2.400" stroke-linecap="round" stroke-linejoin="round"/>
<path d="M457 35.500h12l-6 6.500z" fill="#fff"/>
<path d="M795.500 35.500h11l-5.500 6z" fill="#fff"/>
<path d="M517.49 33.46 L517.76 30.67 L522.24 30.67 L522.51 33.46 L524.41 34.56 L526.96 33.39 L529.20 37.27 L526.91 38.90 L526.91 41.10 L529.20 42.73 L526.96 46.61 L524.41 45.44 L522.51 46.54 L522.24 49.33 L517.76 49.33 L517.49 46.54 L515.59 45.44 L513.04 46.61 L510.80 42.73 L513.09 41.10 L513.09 38.90 L510.80 37.27 L513.04 33.39 L515.59 34.56 Z M520 36.7 a3.300 3.300 0 1 0 0.010 0z" fill="#fff" fill-rule="evenodd" stroke="#fff" stroke-width="1" stroke-linejoin="round"/>
<path d="M1878 31.500c.7 0 1.100.5 1.100 1.100v.5c2.700.6 4.400 2.900 4.400 5.700 0 3.300.9 4.700 2 5.800.4.400.5.800.3 1.200-.2.400-.600.600-1 .6h-13.600c-.4 0-.800-.2-1-.6-.2-.4-.1-.8.3-1.200 1.100-1.100 2-2.500 2-5.800 0-2.800 1.700-5.100 4.400-5.700v-.5c0-.6.400-1.100 1.100-1.100z" fill="#fff"/><path d="M1875.800 47.200h4.400a2.200 2.200 0 0 1-4.400 0z" fill="#fff"/>
<circle cx="1889.300" cy="28.500" r="5.600" fill="#ffd80e"/>
<path d="M122 107v15.600M113.800 114.800h16.400" stroke="#fff" stroke-width="2" fill="none"/>
<g transform="translate(.7 .6)">
<path d="M368 112.300l6.300-2.500v12.700l-6.300 2.500zM375.800 109.800l7.700 2.700v12.500l-7.700-2.700zM385 112.600l6.300-2.600v12.700l-6.300 2.600z" fill="#000"/>
<path d="M379.600 117.800c-2-2.900-5.200-6.300-5.200-9.300a5.200 5.200 0 0 1 10.400 0c0 3-3.200 6.400-5.200 9.300z" fill="#000" stroke="#fff" stroke-width="1.300"/><circle cx="379.600" cy="108.300" r="1.900" fill="#fff"/></g>
<path d="M445.600 112.300h13.600l-6.800 7.500z" fill="#000"/>
<circle cx="537.300" cy="112.800" r="5.800" fill="none" stroke="#85878b" stroke-width="1.700"/><path d="M541.600 117.200l5 5" stroke="#85878b" stroke-width="2" stroke-linecap="round"/>
<circle cx="1882.500" cy="108.5" r="2.100" fill="#000"/>
<circle cx="1882.500" cy="115" r="2.100" fill="#000"/>
<circle cx="1882.500" cy="121.5" r="2.100" fill="#000"/>
<path d="M204 181.500h13l-6.500 6.500z" fill="#a9bccf"/>
<path d="M358 181.500h13l-6.500 6.500z" fill="#a9bccf"/>
<path d="M497 181.500h13l-6.500 6.500z" fill="#a9bccf"/>
<path d="M683 177.500l11.500 11.500M694.500 177.500l-11.500 11.500" stroke="#2e7ab8" stroke-width="2.600" fill="none"/>
<g fill="none" stroke="#000" stroke-width="2"><path d="M1859.500 177.700h19.500M1859.500 184.200h19.500M1859.500 190.600h19.500"/><circle cx="1867" cy="177.700" r="2" fill="#dfe7ec" stroke-width="1.500"/><circle cx="1873" cy="184.200" r="2" fill="#dfe7ec" stroke-width="1.500"/><circle cx="1865.500" cy="190.600" r="2" fill="#dfe7ec" stroke-width="1.500"/></g>
<path d="M247.600 371.200c-2.200-3.200-5.600-6.600-5.600-9.700a5.600 5.600 0 0 1 11.200 0c0 3.100-3.400 6.500-5.600 9.700z" fill="#000"/><circle cx="247.600" cy="361.400" r="2" fill="#e8f1f8"/>
<path d="M626 626l-7.500 7.300 7.500 7.300" fill="none" stroke="#000" stroke-width="1.800" stroke-linecap="round" stroke-linejoin="round"/>
</svg>
</div>
<div id="dim"></div>
<div class="a" style="left:698px;top:38px;width:525px;height:642px;background:#fff;box-shadow:0 0 2px rgba(0,0,0,.4)"></div>
<span class="t" style="left:717.00px;top:63.00px;font-size:22.5px;font-weight:700;color:#000;letter-spacing:-0.853px;">Save as new filter</span>
<span class="t" style="left:716.50px;top:127.60px;font-size:17px;font-weight:700;color:#000;letter-spacing:-0.203px;">Name</span>
<div class="a" style="left:716px;top:164px;width:488px;height:42px;border:1px solid #ccc;border-radius:4px;background:#fff"></div>
<span class="t" style="left:732.00px;top:173.00px;font-size:17.5px;font-weight:400;color:#555;letter-spacing:0.174px;">Highest priority</span>
<span class="t" style="left:716.00px;top:231.00px;font-size:17px;font-weight:700;color:#000;letter-spacing:-0.592px;">Visibility (user)</span>
<div class="a" style="left:716px;top:268px;width:488px;height:150px;border-radius:5px;background:#edf1f6"></div>
<span class="t" style="left:762.50px;top:276.90px;font-size:17.5px;font-weight:400;color:#000;letter-spacing:-0.094px;">Only me</span>
<span class="t" style="left:762.50px;top:326.90px;font-size:17.5px;font-weight:400;color:#000;letter-spacing:-0.233px;">In-house users</span>
<span class="t" style="left:762.50px;top:376.90px;font-size:17.5px;font-weight:400;color:#000;letter-spacing:-0.179px;">All users</span>
<span class="t" style="left:716.00px;top:455.00px;font-size:17px;font-weight:700;color:#000;letter-spacing:-0.466px;">Visibility (project)</span>
<div class="a" style="left:716px;top:491px;width:488px;height:113px;border-radius:5px;background:#edf1f6"></div>
<span class="t" style="left:762.50px;top:495.40px;font-size:17.5px;font-weight:400;color:#000;letter-spacing:0.004px;">This project</span>
<span class="t" style="left:729.00px;top:525.00px;font-size:15px;font-weight:400;color:#a6a6a6;letter-spacing:0.029px;">Office Complex 11</span>
<span class="t" style="left:762.50px;top:562.40px;font-size:17.5px;font-weight:400;color:#000;letter-spacing:0.034px;">All projects</span>
<div class="a" style="left:729px;top:282.0px;width:15px;height:15px;border-radius:50%;border:1.2px solid #767676;background:#fff"></div>
<div class="a" style="left:729px;top:332.0px;width:15px;height:15px;border-radius:50%;border:1.2px solid #767676;background:#fff"></div>
<div class="a" style="left:729px;top:382.0px;width:15px;height:15px;border-radius:50%;border:1.6px solid #0075ff;background:#fff"></div>
<div class="a" style="left:732.5px;top:385.5px;width:8px;height:8px;border-radius:50%;background:#0075ff"></div>
<div class="a" style="left:729px;top:500.5px;width:15px;height:15px;border-radius:50%;border:1.2px solid #767676;background:#fff"></div>
<div class="a" style="left:729px;top:567.5px;width:15px;height:15px;border-radius:50%;border:1.6px solid #0075ff;background:#fff"></div>
<div class="a" style="left:732.5px;top:571.0px;width:8px;height:8px;border-radius:50%;background:#0075ff"></div>
<div class="a" style="left:896px;top:633px;width:150px;height:37px;border-radius:4px;background:#2285c8"></div>
<span class="t" style="left:953.20px;top:638.50px;font-size:17px;font-weight:400;color:#fff;letter-spacing:-0.588px;">Save</span>
<div class="a" style="left:1053px;top:633px;width:150px;height:37px;border-radius:4px;background:#edf1f6;border:1px solid #c5d0dc"></div>
<span class="t" style="left:1101.50px;top:638.50px;font-size:17px;font-weight:400;color:#000;letter-spacing:-0.237px;">Cancel</span>
<svg width="1920" height="1031"><path d="M1178.5 68 l10.5 10.5 M1189 68 l-10.5 10.5" stroke="#000" stroke-width="2.8" fill="none"/></svg>
<div class="a" style="left:707px;top:156px;width:195px;height:58px;border:4px solid #ff8000"></div>
<div class="a" style="left:706px;top:228px;width:196px;height:377px;border:4px solid #ff8000"></div>
<div class="a" style="left:887px;top:625px;width:167px;height:51px;border:4px solid #ff8000"></div>
<div class="a" style="left:859.50px;top:170.70px;width:29.6px;height:29.6px;border-radius:50%;background:#ff8000"></div>
<span class="t" style="left:869.60px;top:173.20px;font-size:15.5px;font-weight:400;color:#fff;letter-spacing:0.775px;">1</span>
<div class="a" style="left:851.60px;top:414.80px;width:29.6px;height:29.6px;border-radius:50%;background:#ff8000"></div>
<span class="t" style="left:861.70px;top:417.30px;font-size:15.5px;font-weight:400;color:#fff;letter-spacing:0.775px;">2</span>
<div class="a" style="left:960.60px;top:590.80px;width:29.6px;height:29.6px;border-radius:50%;background:#ff8000"></div>
<span class="t" style="left:970.70px;top:593.30px;font-size:15.5px;font-weight:400;color:#fff;letter-spacing:0.775px;">3</span>
<div class="a" style="left:1832.5px;top:882px;width:63px;height:63px;border-radius:50%;background:#0866cf;box-shadow:0 2px 6px rgba(0,0,0,.25)"></div>
<span class="t" style="left:1851.80px;top:902.30px;font-size:44.5px;font-weight:700;color:#fff;letter-spacing:-2.987px;line-height:50px;height:50px;margin-top:-13px">?</span>
</body></html>
